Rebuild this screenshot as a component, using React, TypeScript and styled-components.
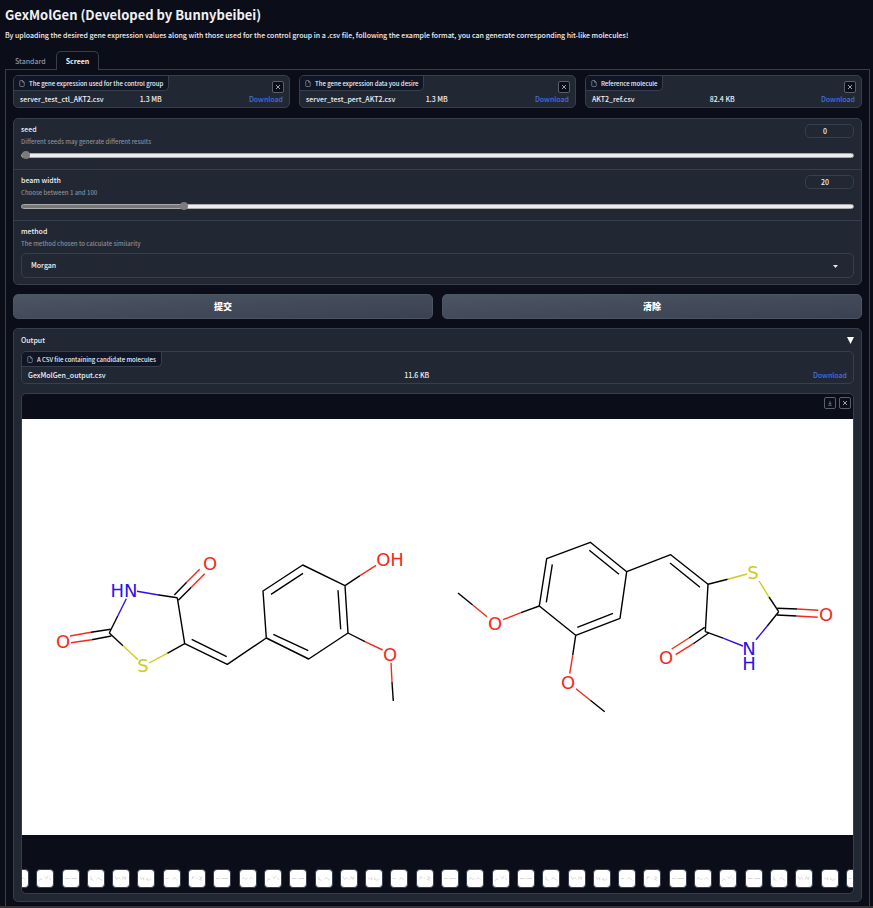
import React, { useState } from "react";
import styled, { createGlobalStyle } from "styled-components";

const color = {
  page: "#0b0d18",
  panel: "#212834",
  tag: "#111626",
  line: "#373f4d",
  text: "#f0f1f4",
  muted: "#888e9a",
  link: "#446fdc",
};

const GlobalStyle = createGlobalStyle`
  * { box-sizing: border-box; }
  body {
    margin: 0;
    background: ${color.page};
    color: ${color.text};
    font-family: "Noto Sans CJK SC", "Noto Sans", sans-serif;
    font-size: 7px;
    line-height: 10px;
  }
  button, input, select { font: inherit; color: inherit; }
`;

const Page = styled.main`
  display: flex;
  flex-direction: column;
  min-height: 100vh;
  border-bottom: 3px solid #383536;
`;

const Header = styled.header`
  padding: 5px 5px 0;
`;

const Title = styled.h1`
  margin: 0;
  font-size: 13px;
  line-height: 20px;
  font-weight: 700;
`;

const Intro = styled.p`
  margin: 5px 0 11px;
  font-weight: 500;
`;

const Tabs = styled.div`
  display: flex;
  padding-left: 5px;
  position: relative;
  z-index: 1;
  margin-bottom: -1px;
`;

const Tab = styled.button<{ $active?: boolean }>`
  height: 19px;
  padding: 0 9px;
  font-size: 7px;
  line-height: 12px;
  font-weight: ${(p) => (p.$active ? 700 : 500)};
  color: ${(p) => (p.$active ? color.text : "#8f95a1")};
  background: ${(p) => (p.$active ? color.page : "transparent")};
  border: 1px solid ${(p) => (p.$active ? color.line : "transparent")};
  border-bottom: 0;
  border-radius: 5px 5px 0 0;
`;

const Panel = styled.section`
  flex: 1;
  display: flex;
  flex-direction: column;
  gap: 9px;
  margin: 0 3px 0 5px;
  padding: 5px 7px 4px;
  border: 1px solid ${color.line};
  border-bottom: 0;
`;

const Columns = styled.div<{ $count: number }>`
  display: grid;
  grid-template-columns: repeat(${(p) => p.$count}, 1fr);
  gap: 9px;
`;

const FileRow = styled(Columns)`
  margin-bottom: 1px;
`;

const Card = styled.div`
  position: relative;
  background: ${color.panel};
  border: 1px solid ${color.line};
  border-radius: 5px;
  overflow: hidden;
`;

const Tag = styled.div`
  display: inline-flex;
  align-items: center;
  gap: 4px;
  height: 15px;
  padding: 1px 5px 0;
  vertical-align: top;
  font-size: 6px;
  font-weight: 500;
  background: ${color.tag};
  border: 1px solid ${color.line};
  border-width: 0 1px 1px 0;
  border-radius: 0 0 5px 0;
  svg { width: 6px; height: 7px; }
`;

const FileTable = styled.table<{ $nameShare: number }>`
  width: 100%;
  table-layout: fixed;
  border-collapse: collapse;
  font-size: 7px;
  td {
    height: 16px;
    padding: 0;
    font-weight: 500;
    white-space: nowrap;
  }
  td:first-child { width: ${(p) => p.$nameShare}%; padding-left: 6px; }
  td:nth-child(2) { width: 24px; text-align: right; }
  td:last-child { padding-right: 6px; text-align: right; }
`;

const FileLink = styled.a`
  color: ${color.link};
  font-size: 7px;
  text-decoration: none;
`;

const IconButton = styled.button`
  display: grid;
  place-items: center;
  width: 12px;
  height: 12px;
  padding: 0;
  background: ${color.page};
  border: 1px solid #5a606b;
  border-radius: 2px;
  svg { width: 6px; height: 6px; }
`;

const CardClose = styled(IconButton)`
  position: absolute;
  top: 5px;
  right: 5px;
`;

const Field = styled.div`
  padding: 5px 7px 6px;
  & + & { border-top: 1px solid ${color.line}; }
`;

const FieldHead = styled.div`
  display: flex;
  justify-content: space-between;
  align-items: flex-start;
`;

const FieldLabel = styled.label`
  display: block;
  font-size: 7px;
  line-height: 10px;
  font-weight: 500;
`;

const Hint = styled.div`
  margin-top: 3px;
  font-size: 6px;
  line-height: 10px;
  font-weight: 500;
  color: ${color.muted};
`;

const NumberInput = styled.input`
  width: 49px;
  height: 14px;
  padding: 0 9px 0 0;
  text-align: center;
  font-weight: 500;
  background: ${color.panel};
  border: 1px solid ${color.line};
  border-radius: 5px;
  appearance: textfield;
  &::-webkit-inner-spin-button { display: none; }
`;

const Range = styled.input<{ $fill: number }>`
  appearance: none;
  display: block;
  width: 100%;
  height: 9px;
  margin: 4px 0 3px;
  background: transparent;
  &::-webkit-slider-runnable-track {
    height: 5px;
    border: 1px solid #aaaaab;
    border-radius: 3px;
    background: linear-gradient(to right, #777 ${(p) => p.$fill}%, #ececec ${(p) => p.$fill}%);
  }
  &::-webkit-slider-thumb {
    appearance: none;
    width: 8px;
    height: 8px;
    margin-top: -3px;
    border-radius: 50%;
    background: #7c7b7a;
  }
`;

const SelectBox = styled.div`
  position: relative;
  margin-top: 4px;
  svg {
    position: absolute;
    right: 16px;
    top: 12px;
    width: 5px;
    height: 3px;
    pointer-events: none;
  }
`;

const Select = styled.select`
  appearance: none;
  display: block;
  width: 100%;
  height: 25px;
  padding: 0 9px 1px;
  font-weight: 500;
  background: ${color.panel};
  border: 1px solid ${color.line};
  border-radius: 5px;
`;

const Action = styled.button`
  height: 25px;
  padding: 0;
  font-size: 9px;
  font-weight: 900;
  color: #fff;
  background: linear-gradient(to bottom right, #4b5563, #3b4151);
  border: 1px solid #4b5563;
  border-radius: 5px;
`;

const Output = styled(Card)`
  padding: 6px 7px 7px;
`;

const OutputHead = styled.button`
  display: flex;
  justify-content: space-between;
  align-items: center;
  width: 100%;
  height: 10px;
  margin-bottom: 6px;
  padding: 0;
  font-weight: 500;
  background: none;
  border: 0;
  svg { width: 7px; height: 7px; }
`;

const Gallery = styled(Card)`
  margin-top: 9px;
  background: ${color.page};
`;

const GalleryTools = styled.div`
  display: flex;
  justify-content: flex-end;
  gap: 3px;
  height: 25px;
  padding: 3px 2px;
`;

const Molecules = styled.svg`
  display: block;
  width: 100%;
  background: #fff;
  font-family: "DejaVu Sans", sans-serif;
  font-size: 18px;
`;

const Thumbs = styled.div`
  display: flex;
  justify-content: space-between;
  margin: 34px -11px 5px;
`;

const Thumb = styled.button`
  flex: none;
  width: 18px;
  height: 19px;
  padding: 1px;
  background: #fff;
  border: 1px solid #374151;
  border-radius: 4px;
  overflow: hidden;
  svg { display: block; width: 100%; height: 100%; }
`;

const FileIcon = () => (
  <svg viewBox="0 0 12 14" fill="none" stroke="#8d919c" strokeWidth="1.4" aria-hidden="true">
    <path d="M7 1H3a1.500 1.500 0 0 0-1.500 1.500v9A1.500 1.500 0 0 0 3 13h6a1.500 1.500 0 0 0 1.500-1.500V4.500zM7 1v3.500h3.500" />
  </svg>
);

const CloseIcon = () => (
  <svg viewBox="0 0 12 12" stroke="#c3c6cc" strokeWidth="1.600" aria-hidden="true">
    <path d="M2 2l8 8M10 2l-8 8" />
  </svg>
);

const DownloadIcon = () => (
  <svg viewBox="0 0 12 12" fill="none" stroke="#9a9ea7" strokeWidth="1.300" aria-hidden="true">
    <path d="M6 2v6M3.500 6L6 8.500 8.500 6M2.500 10.500h7" />
  </svg>
);

type FileCardProps = { label: string; name: string; size: string; closable?: boolean };

const FileCard = ({ label, name, size, closable }: FileCardProps) => (
  <Card>
    <Tag>
      <FileIcon />
      {label}
    </Tag>
    {closable && (
      <CardClose aria-label={`Clear ${name}`}>
        <CloseIcon />
      </CardClose>
    )}
    <FileTable aria-label={label} $nameShare={closable ? 45 : 46}>
      <tbody>
        <tr>
          <td>{name}</td>
          <td>{size}</td>
          <td>
            <FileLink href="#download">Download</FileLink>
          </td>
        </tr>
      </tbody>
    </FileTable>
  </Card>
);

type SliderProps = { id: string; label: string; hint: string; min: number; initial: number };

const SliderField = ({ id, label, hint, min, initial }: SliderProps) => {
  const [value, setValue] = useState(initial);
  const change = (e: React.ChangeEvent<HTMLInputElement>) => setValue(Number(e.target.value));
  return (
    <Field>
      <FieldHead>
        <div>
          <FieldLabel htmlFor={id}>{label}</FieldLabel>
          <Hint>{hint}</Hint>
        </div>
        <NumberInput type="number" id={id} min={min} max={100} value={value} onChange={change} />
      </FieldHead>
      <Range
        type="range"
        aria-label={label}
        min={min}
        max={100}
        value={value}
        onChange={change}
        $fill={((value - min) / (100 - min)) * 100}
      />
    </Field>
  );
};

const RED = "#f42a1c";
const BLUE = "#2c10f0";
const YELLOW = "#cccc1e";

const carbonBonds = [
  "M155.3 178.700L162.700 224.700L205.300 245.300L244.300 219",
  "M169.700 220.300L204.700 237.700",
  "M244.300 219L241 172L280.700 146L323 166.700L326 214L286.700 240Z",
  "M249 175.300L281 154.300M316 171.300L318.700 210.300M251.300 215.300L286.300 231.700",
  "M517.300 187L524.700 139.700L568.300 123.300L604.700 152.700L598 199.300L553.700 216.300Z",
  "M530.300 145.300L524.300 183.300M567.300 131.300L597 155.300M591 194.300L555.300 208.300",
  "M604.700 152.700L648.700 135.700L686 165.300L683.300 212.700",
  "M648 144L678 168.300",
];

type Bond = [number, number, number, number, number, number, string];

// Carbon end, colour change, heteroatom end, heteroatom colour.
const heteroBonds: Bond[] = [
  [155.3, 178.7, 135.3, 175.7, 115, 172.3, BLUE],
  [87.3, 214, 95.7, 197, 104.3, 179.7, BLUE],
  [152.3, 176, 164.7, 163.3, 177.7, 150.3, RED],
  [156.3, 181.3, 169.3, 168.3, 182.7, 154.7, RED],
  [88.7, 210.3, 69, 213.3, 48, 217, RED],
  [89.3, 217, 69.7, 220.7, 49, 223.7, RED],
  [87.3, 214, 101, 226.7, 116, 240.7, YELLOW],
  [162.7, 224.7, 145.3, 234.3, 127, 244, YELLOW],
  [323, 166.7, 338, 156.7, 354, 146.3, RED],
  [326, 214, 343, 222.7, 360.7, 231, RED],
  [371.3, 282, 370, 263, 369, 243.7, RED],
  [436, 174, 450.7, 186, 465, 197.7, RED],
  [517.3, 187, 499, 193.7, 481, 200.7, RED],
  [553.7, 216.3, 550.7, 236.3, 547.7, 254.7, RED],
  [582.7, 292.7, 568.3, 281.3, 554, 269.7, RED],
  [686, 165.3, 705.7, 160.3, 725, 155, YELLOW],
  [756.7, 192.7, 747, 178, 737, 162, YELLOW],
  [755.3, 189.3, 775.3, 190, 796.3, 191.3, RED],
  [755, 196, 774.7, 197, 795.7, 198.3, RED],
  [756.7, 192.7, 745.3, 207, 734, 220.7, BLUE],
  [683.3, 212.7, 701.7, 219.3, 721, 227, BLUE],
  [682.7, 208.3, 667, 219, 649.7, 230, RED],
  [686.7, 214, 671.3, 224.7, 653.7, 235.7, RED],
];

const atoms: [string, number, number, string][] = [
  ["O", 188, 151, RED],
  ["HN", 102, 178, BLUE],
  ["O", 41, 229, RED],
  ["S", 121, 253, YELLOW],
  ["OH", 368, 147, RED],
  ["O", 368, 242, RED],
  ["O", 473, 211, RED],
  ["O", 546, 270, RED],
  ["S", 731, 160, YELLOW],
  ["O", 804, 202, RED],
  ["O", 644, 245, RED],
];

const MoleculeDrawing = () => (
  <Molecules viewBox="0 0 831 416" role="img" aria-label="Candidate molecules">
    <g fill="none" strokeWidth="1.4" strokeLinejoin="round">
      <path d={carbonBonds.join("")} stroke="#000" />
      {heteroBonds.map(([x1, y1, mx, my, x2, y2, tint], i) => (
        <React.Fragment key={i}>
          <path d={`M${x1} ${y1}L${mx} ${my}`} stroke="#000" />
          <path d={`M${mx} ${my}L${x2} ${y2}`} stroke={tint} />
        </React.Fragment>
      ))}
    </g>
    {atoms.map(([symbol, x, y, tint], i) => (
      <text key={i} x={x} y={y} fill={tint} textAnchor="middle">
        {symbol}
      </text>
    ))}
    <text y={236} fill={BLUE} textAnchor="middle">
      <tspan x={727}>N</tspan>
      <tspan x={727} dy={15}>H</tspan>
    </text>
  </Molecules>
);

const thumbShapes = [
  "M1 9l2-2 2 2 2-1M9 9l2-2 2 2",
  "M1 11l2-3 2 2M7 6l2 2 2-3M12 8l2 1",
  "M1 8h5M8 8h6",
  "M2 6v3l3 1M8 9l2-2 2 2 2 1",
  "M1 6l2 3 2-2 2 2M9 9l1-3 2 3 1-3",
  "M1 7l2 2 2-2v3M9 7l-1 2 3 1 2-2",
  "M1 8h3M8 9l2-2 2 2 1 1",
  "M2 9l1-3 2 1M7 8h1M10 6l3 1-3 2 3 1",
  "M1 8h4M7 8h7",
];

const thumbs = Array.from({ length: 34 }, (_, i) => thumbShapes[i % thumbShapes.length]);

export default function App() {
  return (
    <>
      <GlobalStyle />
      <Page>
        <Header>
          <Title>GexMolGen (Developed by Bunnybeibei)</Title>
          <Intro>
            By uploading the desired gene expression values along with those used for the control group in a .csv
            file, following the example format, you can generate corresponding hit-like molecules!
          </Intro>
        </Header>
        <Tabs role="tablist">
          <Tab role="tab" aria-selected={false}>Standard</Tab>
          <Tab role="tab" aria-selected $active>Screen</Tab>
        </Tabs>
        <Panel>
          <FileRow $count={3}>
            <FileCard
              label="The gene expression used for the control group"
              name="server_test_ctl_AKT2.csv"
              size="1.3 MB"
              closable
            />
            <FileCard
              label="The gene expression data you desire"
              name="server_test_pert_AKT2.csv"
              size="1.3 MB"
              closable
            />
            <FileCard label="Reference molecule" name="AKT2_ref.csv" size="82.4 KB" closable />
          </FileRow>
          <Card>
            <SliderField
              id="seed"
              label="seed"
              hint="Different seeds may generate different results"
              min={0}
              initial={0}
            />
            <SliderField id="beam" label="beam width" hint="Choose between 1 and 100" min={1} initial={20} />
            <Field>
              <FieldLabel htmlFor="method">method</FieldLabel>
              <Hint>The method chosen to calculate similarity</Hint>
              <SelectBox>
                <Select id="method" defaultValue="Morgan">
                  <option>Morgan</option>
                </Select>
                <svg viewBox="0 0 5 3" fill="#e6e7ea" aria-hidden="true">
                  <path d="M0 0h5L2.500 3z" />
                </svg>
              </SelectBox>
            </Field>
          </Card>
          <Columns $count={2}>
            <Action>提交</Action>
            <Action>清除</Action>
          </Columns>
          <Output>
            <OutputHead aria-expanded>
              Output
              <svg viewBox="0 0 7 7" fill="#fff" aria-hidden="true">
                <path d="M0 0h7L3.500 7z" />
              </svg>
            </OutputHead>
            <FileCard label="A CSV file containing candidate molecules" name="GexMolGen_output.csv" size="11.6 KB" />
            <Gallery>
              <GalleryTools>
                <IconButton aria-label="Download image">
                  <DownloadIcon />
                </IconButton>
                <IconButton aria-label="Close preview">
                  <CloseIcon />
                </IconButton>
              </GalleryTools>
              <MoleculeDrawing />
              <Thumbs>
                {thumbs.map((shape, i) => (
                  <Thumb key={i} aria-label={`Candidate ${i + 1}`}>
                    <svg viewBox="0 0 15 16" fill="none" stroke="#c9c5cd" strokeWidth="0.700">
                      <path d={shape} />
                    </svg>
                  </Thumb>
                ))}
              </Thumbs>
            </Gallery>
          </Output>
        </Panel>
      </Page>
    </>
  );
}
